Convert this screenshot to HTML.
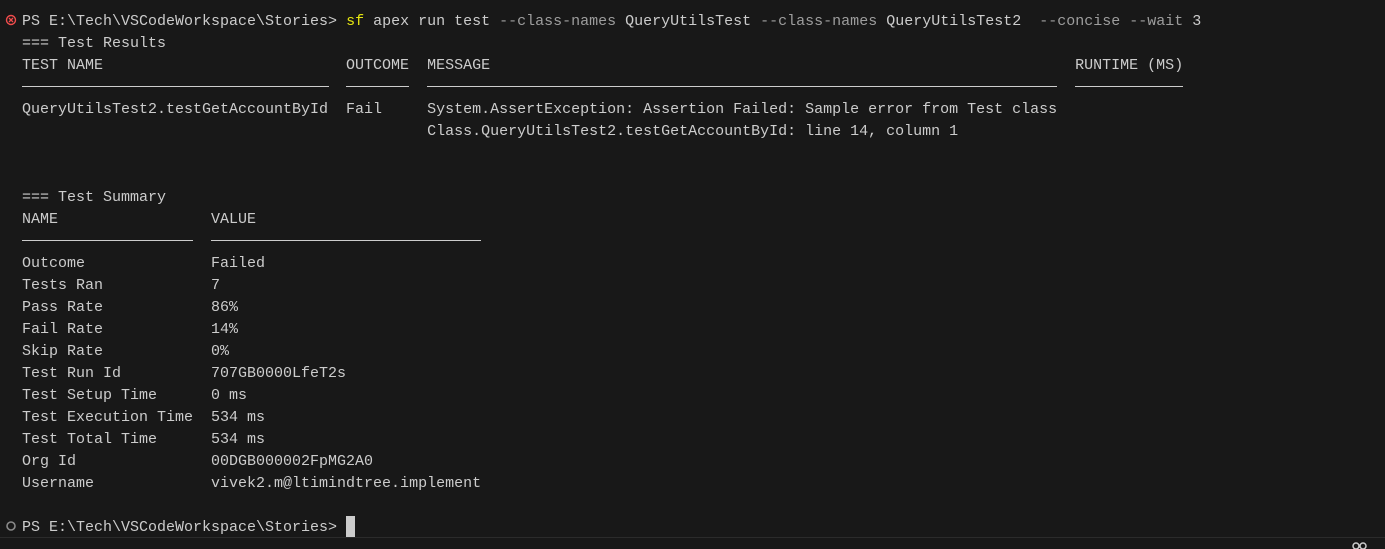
<!DOCTYPE html>
<html><head><meta charset="utf-8"><style>
html,body{margin:0;padding:0;background:#181818;width:1385px;height:549px;overflow:hidden;position:relative}
pre{position:absolute;left:22px;top:11px;margin:0;font:15px/22px "Liberation Mono",monospace;color:#cccccc;white-space:pre}
.y{color:#e5e510}.g{color:#9d9d9d}
.u{position:absolute;height:1px;background:#cccccc}
</style></head><body>
<pre>PS E:\Tech\VSCodeWorkspace\Stories&gt; <span class="y">sf</span> apex run test <span class="g">--class-names</span> QueryUtilsTest <span class="g">--class-names</span> QueryUtilsTest2  <span class="g">--concise</span> <span class="g">--wait</span> 3
=== Test Results
TEST NAME                           OUTCOME  MESSAGE                                                                 RUNTIME (MS)

QueryUtilsTest2.testGetAccountById  Fail     System.AssertException: Assertion Failed: Sample error from Test class
                                             Class.QueryUtilsTest2.testGetAccountById: line 14, column 1


=== Test Summary
NAME                 VALUE

Outcome              Failed
Tests Ran            7
Pass Rate            86%
Fail Rate            14%
Skip Rate            0%
Test Run Id          707GB0000LfeT2s
Test Setup Time      0 ms
Test Execution Time  534 ms
Test Total Time      534 ms
Org Id               00DGB000002FpMG2A0
Username             vivek2.m@ltimindtree.implement

PS E:\Tech\VSCodeWorkspace\Stories&gt; </pre>
<div class="u" style="left:22px;width:307px;top:86px"></div>
<div class="u" style="left:346px;width:63px;top:86px"></div>
<div class="u" style="left:427px;width:630px;top:86px"></div>
<div class="u" style="left:1075px;width:108px;top:86px"></div>
<div class="u" style="left:22px;width:171px;top:240px"></div>
<div class="u" style="left:211px;width:270px;top:240px"></div>
<div style="position:absolute;left:346px;top:516px;width:9px;height:21px;background:#cccccc"></div>
<svg style="position:absolute;left:5px;top:14px" width="12" height="12"><circle cx="6" cy="6" r="4.5" fill="none" stroke="#f14c4c" stroke-width="1.4"/><path d="M4 4L8 8M8 4L4 8" stroke="#f14c4c" stroke-width="1.3"/></svg>
<svg style="position:absolute;left:5px;top:520px" width="12" height="12"><circle cx="6" cy="6" r="4" fill="none" stroke="#8a8a8a" stroke-width="1.6"/></svg>
<div style="position:absolute;left:0;top:537px;width:1385px;height:1px;background:#2b2b2b"></div>
<svg style="position:absolute;left:1352px;top:542px" width="16" height="7"><circle cx="4" cy="4" r="3" fill="none" stroke="#ccc" stroke-width="1.5"/><circle cx="11" cy="4" r="3" fill="none" stroke="#ccc" stroke-width="1.5"/></svg>
</body></html>
